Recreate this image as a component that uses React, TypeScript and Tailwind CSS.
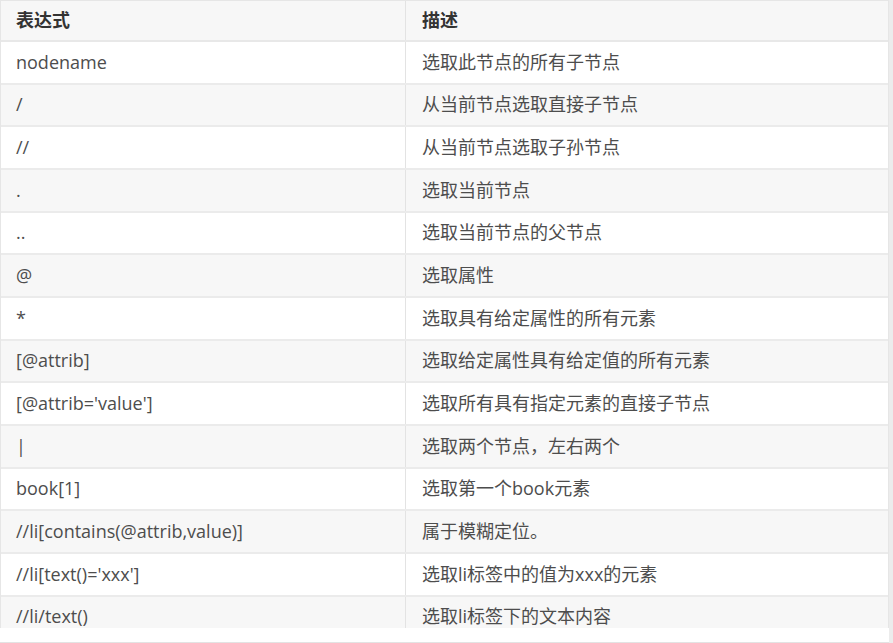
const ROWS: [string, string][] = [
  ["nodename", "选取此节点的所有子节点"],
  ["/", "从当前节点选取直接子节点"],
  ["//", "从当前节点选取子孙节点"],
  [".", "选取当前节点"],
  ["..", "选取当前节点的父节点"],
  ["@", "选取属性"],
  ["*", "选取具有给定属性的所有元素"],
  ["[@attrib]", "选取给定属性具有给定值的所有元素"],
  ["[@attrib='value']", "选取所有具有指定元素的直接子节点"],
  ["|", "选取两个节点，左右两个"],
  ["book[1]", "选取第一个book元素"],
  ["//li[contains(@attrib,value)]", "属于模糊定位。"],
  ["//li[text()='xxx']", "选取li标签中的值为xxx的元素"],
  ["//li/text()", "选取li标签下的文本内容"],
];

export default function App() {
  return (
    <div
      className="flex h-[643px] w-[893px] overflow-hidden bg-white text-[18px] text-[#4d4d4d]"
      style={{ fontFamily: '"Open Sans", "Noto Sans CJK SC", sans-serif' }}
    >
      <div className="flex w-[889px] flex-col border-b border-[#e3e3e3]">
        <div className="h-[628px] overflow-hidden border-t border-l border-r border-[#e6e6e6]">
          {/* header */}
          <div className="flex h-[41px] items-center border-b-2 border-[#e8e8e8] bg-[#f7f7f7] font-bold text-[#333]">
            <div className="flex h-full w-[405px] items-center border-r border-[#e3e3e3] pl-[15px]">表达式</div>
            <div className="pl-[16px]">描述</div>
          </div>
          {ROWS.map(([expr, desc], i) => (
            <div
              key={i}
              className={`flex h-[42.67px] items-center border-b-2 border-[#ebebeb] ${
                i % 2 === 0 ? "bg-white" : "bg-[#f7f7f7]"
              }`}
            >
              <div className="flex h-full w-[405px] items-center border-r border-[#e3e3e3] pl-[15px]">{expr}</div>
              <div className="pl-[16px]">{desc}</div>
            </div>
          ))}
        </div>
        <div className="flex-1 bg-white" />
      </div>
      <div className="w-[4px] bg-[#ececec]" />
    </div>
  );
}
